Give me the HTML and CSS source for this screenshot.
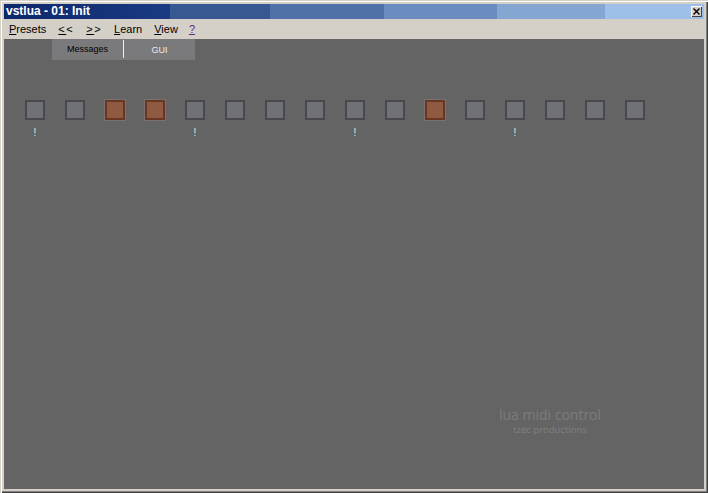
FILE: index.html
```html
<!DOCTYPE html>
<html>
<head>
<meta charset="utf-8">
<link rel="stylesheet" href="styles.css">
</head>
<body>
<div class="window">
  <div class="titlebar">
    <span class="title">vstlua - 01: Init</span>
    <span class="close"><svg width="7" height="7" viewBox="0 0 7 7"><path d="M0.5 0.5 L6.5 6.5 M6.5 0.5 L0.5 6.5" stroke="#000" stroke-width="1.4"/></svg></span>
  </div>
  <div class="menubar">
    <span class="mi"><u>P</u>resets</span>
    <span class="mi mi-arrow"><u>&lt;</u>&lt;</span>
    <span class="mi mi-arrow"><u>&gt;</u>&gt;</span>
    <span class="mi"><u>L</u>earn</span>
    <span class="mi"><u>V</u>iew</span>
    <span class="mi mi-help"><u>?</u></span>
  </div>
  <div class="content">
    <div class="tabs">
      <div class="tab tab-msg">Messages</div>
      <div class="tab tab-gui">GUI</div>
    </div>
    <div class="pads">
      <div class="pad"><div class="sq"></div><div class="lbl">!</div></div>
      <div class="pad"><div class="sq"></div><div class="lbl"></div></div>
      <div class="pad"><div class="sq on"></div><div class="lbl"></div></div>
      <div class="pad"><div class="sq on"></div><div class="lbl"></div></div>
      <div class="pad"><div class="sq"></div><div class="lbl">!</div></div>
      <div class="pad"><div class="sq"></div><div class="lbl"></div></div>
      <div class="pad"><div class="sq"></div><div class="lbl"></div></div>
      <div class="pad"><div class="sq"></div><div class="lbl"></div></div>
      <div class="pad"><div class="sq"></div><div class="lbl">!</div></div>
      <div class="pad"><div class="sq"></div><div class="lbl"></div></div>
      <div class="pad"><div class="sq on"></div><div class="lbl"></div></div>
      <div class="pad"><div class="sq"></div><div class="lbl"></div></div>
      <div class="pad"><div class="sq"></div><div class="lbl">!</div></div>
      <div class="pad"><div class="sq"></div><div class="lbl"></div></div>
      <div class="pad"><div class="sq"></div><div class="lbl"></div></div>
      <div class="pad"><div class="sq"></div><div class="lbl"></div></div>
    </div>
    <div class="brand">
      <div class="b1">lua midi control</div>
      <div class="b2">tzec productions</div>
    </div>
  </div>
</div>
</body>
</html>
```
FILE: styles.css
```css
html, body {
  margin: 0;
  padding: 0;
  background: #d4d0c8;
}
.window {
  width: 708px;
  height: 493px;
  box-sizing: border-box;
  padding: 4px;
  background: #d4d0c8;
  display: flex;
  flex-direction: column;
  box-shadow: inset 1px 1px 0 #d4d0c8, inset 2px 2px 0 #ffffff, inset -1px -1px 0 #404040, inset -2px -2px 0 #808080;
  font-family: "Liberation Sans", Arial, sans-serif;
}
.titlebar {
  height: 15px;
  display: flex;
  align-items: center;
  justify-content: space-between;
  background: linear-gradient(to right,
    #0c286c 0px, #1a3a82 166px,
    #385894 166px, #385894 266px,
    #5070a8 266px, #5070a8 380px,
    #6a8cc0 380px, #6a8cc0 493px,
    #86a6d2 493px, #86a6d2 601px,
    #9ec0e8 601px, #9ec0e8 100%);
}
.title {
  color: #ffffff;
  font-weight: bold;
  font-size: 12px;
  padding-left: 2px;
  line-height: 15px;
}
.close {
  width: 11px;
  height: 11px;
  margin-right: 2px;
  box-sizing: border-box;
  background: #d4d0c8;
  box-shadow: inset 1px 1px 0 #ffffff, inset -1px -1px 0 #404040;
  display: flex;
  align-items: center;
  justify-content: center;
}
.menubar {
  height: 20px;
  display: flex;
  align-items: center;
  gap: 12px;
  padding-left: 5px;
  font-size: 11px;
  color: #000;
}
.mi u {
  text-decoration: underline;
}
.mi-arrow {
  letter-spacing: 1.5px;
}
.mi-help {
  color: #5a2a78;
  margin-left: -1px;
}
.content {
  flex: 1;
  background: #646464;
  display: flex;
  flex-direction: column;
}
.tabs {
  display: flex;
  margin-left: 48px;
  width: 143px;
  height: 21px;
  background: #7a7a7c;
}
.tab {
  flex: 1;
  display: flex;
  align-items: center;
  justify-content: center;
  font-size: 9px;
}
.tab-msg {
  color: #000;
  border-right: 1px solid #f0f0f0;
  margin: 1px 0 2px 0;
}
.tab-gui {
  color: #ececec;
}
.pads {
  display: flex;
  gap: 20px;
  padding-left: 21px;
  margin-top: 40px;
}
.pad {
  width: 20px;
  display: flex;
  flex-direction: column;
  align-items: center;
}
.sq {
  width: 20px;
  height: 20px;
  box-sizing: border-box;
  border: 2px solid #48484e;
  background: #707077;
}
.sq.on {
  border-color: #6a3522;
  background: #8e5b42;
  box-shadow: 0 0 0 1px #78716e;
}
.lbl {
  height: 12px;
  line-height: 12px;
  margin-top: 7px;
  font-size: 10px;
  color: #e2e8e4;
}
.brand {
  margin-top: auto;
  align-self: flex-end;
  margin-right: 94px;
  margin-bottom: 53px;
  text-align: center;
  font-family: "Open Sans", "DejaVu Sans", sans-serif;
  color: #7c7c7c;
  width: 120px;
}
.b1 {
  font-size: 14px;
  line-height: 18px;
}
.b2 {
  font-size: 9.5px;
  line-height: 12px;
  color: #808080;
}
```
